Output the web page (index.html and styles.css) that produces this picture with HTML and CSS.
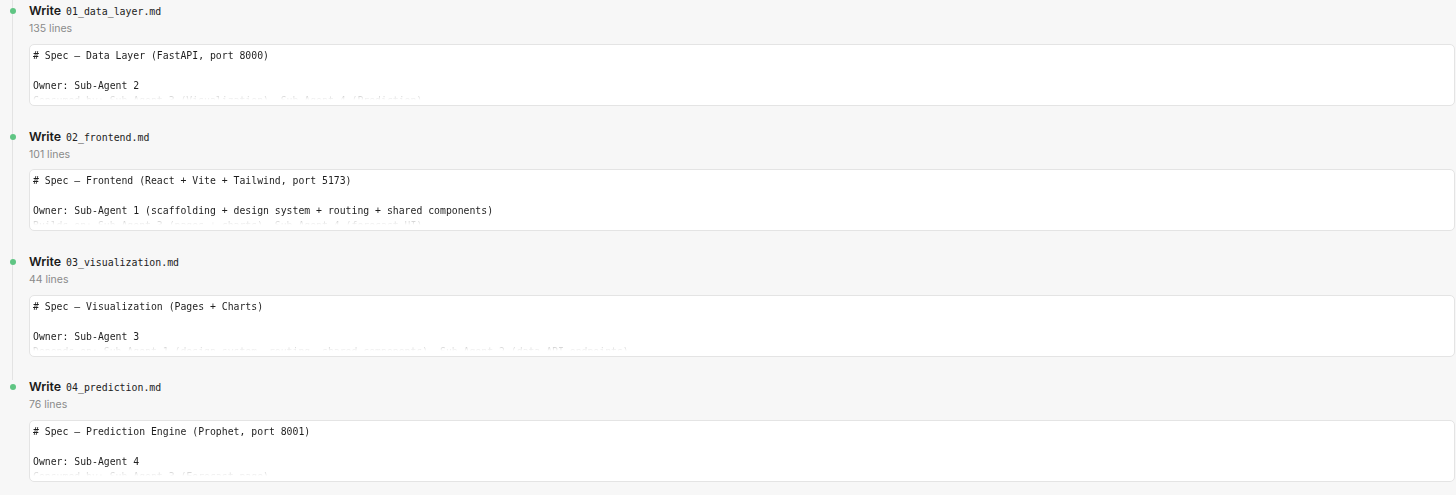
FILE: index.html
```html
<!DOCTYPE html>
<html>
<head>
<meta charset="utf-8">
<link rel="stylesheet" href="styles.css">
</head>
<body>
<div class="timeline">
  <div class="item">
    <span class="dot"></span>
    <div class="head"><span class="verb">Write</span> <span class="file">01_data_layer.md</span></div>
    <div class="meta">135 lines</div>
    <div class="card"><pre class="code"># Spec — Data Layer (FastAPI, port 8000)

Owner: Sub-Agent 2
Consumed by: Sub-Agent 3 (Visualization), Sub-Agent 4 (Prediction)
</pre></div>
  </div>
  <div class="item">
    <span class="dot"></span>
    <div class="head"><span class="verb">Write</span> <span class="file">02_frontend.md</span></div>
    <div class="meta">101 lines</div>
    <div class="card"><pre class="code"># Spec — Frontend (React + Vite + Tailwind, port 5173)

Owner: Sub-Agent 1 (scaffolding + design system + routing + shared components)
Builds on: Sub-Agent 3 (pages + charts), Sub-Agent 4 (forecast UI)
</pre></div>
  </div>
  <div class="item">
    <span class="dot"></span>
    <div class="head"><span class="verb">Write</span> <span class="file">03_visualization.md</span></div>
    <div class="meta">44 lines</div>
    <div class="card"><pre class="code"># Spec — Visualization (Pages + Charts)

Owner: Sub-Agent 3
Depends on: Sub-Agent 1 (design system, routing, shared components), Sub-Agent 2 (data API endpoints)
</pre></div>
  </div>
  <div class="item last">
    <span class="dot"></span>
    <div class="head"><span class="verb">Write</span> <span class="file">04_prediction.md</span></div>
    <div class="meta">76 lines</div>
    <div class="card"><pre class="code"># Spec — Prediction Engine (Prophet, port 8001)

Owner: Sub-Agent 4
Consumed by: Sub-Agent 3 (Forecast page)
</pre></div>
  </div>
</div>
</body>
</html>
```

FILE: styles.css
```css
html, body {
  margin: 0;
  padding: 0;
  background: #f7f7f7;
}

body {
  font-family: "Inter", "Liberation Sans", sans-serif;
  color: #1c1c1c;
}

.timeline {
  display: flex;
  flex-direction: column;
  gap: 21.6px;
  padding: 2.3px 1px 0 29px;
}

.item {
  position: relative;
  display: flex;
  flex-direction: column;
}

.item::before {
  content: "";
  position: absolute;
  left: -17px;
  top: -4px;
  width: 1px;
  height: calc(100% + 26px);
  background: #e3e3e3;
}

.item.last::before {
  height: 6px;
}

.dot {
  position: absolute;
  left: -19.5px;
  top: 6px;
  width: 6px;
  height: 6px;
  border-radius: 50%;
  background: #5fc583;
}

.head {
  height: 18px;
  line-height: 18px;
  display: flex;
  align-items: baseline;
  gap: 5px;
}

.verb {
  font-weight: 600;
  font-size: 12.4px;
  color: #1a1a1a;
}

.file {
  font-family: "DejaVu Sans Mono", "Liberation Mono", monospace;
  font-size: 9.9px;
  color: #222;
}

.meta {
  height: 16px;
  line-height: 16px;
  margin-top: 1px;
  font-size: 10.5px;
  color: #8a8a8a;
  margin-bottom: 6.7px;
}

.card {
  background: #ffffff;
  border: 1px solid #e4e4e4;
  border-radius: 5px;
  padding: 3px 3px 5px 3px;
}

.code {
  margin: 0;
  height: 52px;
  overflow: hidden;
  font-family: "DejaVu Sans Mono", "Liberation Mono", monospace;
  font-size: 9.8px;
  line-height: 15px;
  color: #1e1e1e;
  -webkit-mask-image: linear-gradient(to bottom, #000 0, #000 44px, rgba(0,0,0,0.25) 47px, rgba(0,0,0,0) 52px);
  mask-image: linear-gradient(to bottom, #000 0, #000 44px, rgba(0,0,0,0.25) 47px, rgba(0,0,0,0) 52px);
}
```
